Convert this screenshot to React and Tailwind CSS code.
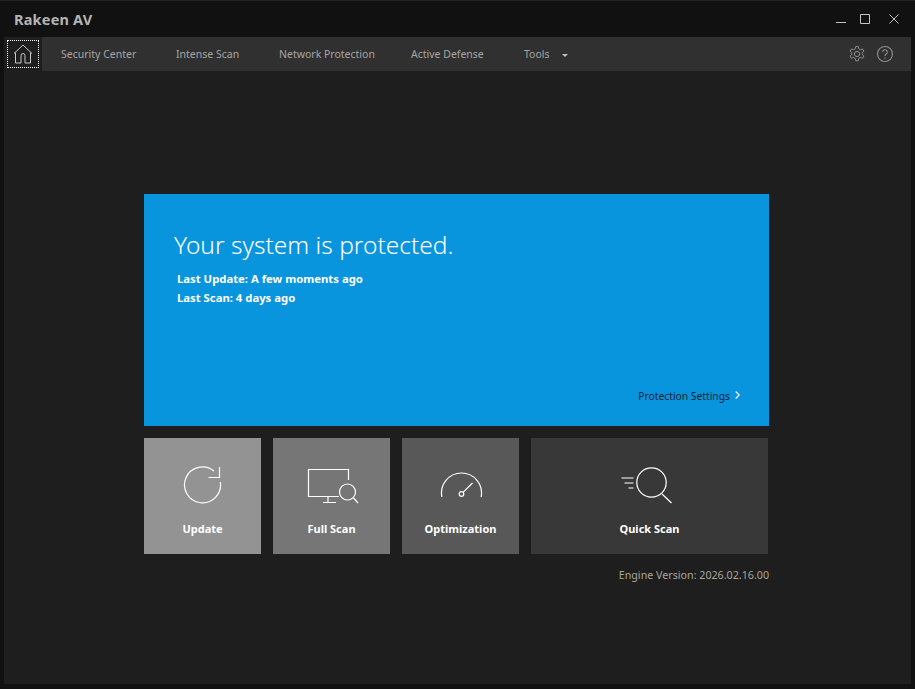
const font = { fontFamily: '"Noto Sans", sans-serif' };

function Home() {
  return (
    <svg width="20" height="20" viewBox="0 0 20 20" fill="none" stroke="#c8c8c8" strokeWidth="1">
      <path d="M1 9.500 10 1l9 8.500M2.500 8.500V19H8v-7.500a2 2 0 0 1 4 0V19h5.500V8.500" />
    </svg>
  );
}

function Gear() {
  return (
    <svg width="18" height="18" viewBox="0 0 24 24" fill="none" stroke="#8f8f8f" strokeWidth="1.300" strokeLinejoin="round">
      <path d="M10.300 2h3.400l.6 3 2.300 1.300 2.900-1 1.700 3-2.300 2v2.400l2.300 2-1.700 3-2.900-1-2.300 1.300-.6 3h-3.400l-.6-3-2.300-1.300-2.900 1-1.700-3 2.300-2v-2.400l-2.300-2 1.700-3 2.900 1L9.700 5z" />
      <circle cx="12" cy="12" r="3.500" />
    </svg>
  );
}

function Help() {
  return (
    <svg width="18" height="18" viewBox="0 0 18 18" fill="none" stroke="#8f8f8f" strokeWidth="1.100">
      <circle cx="9" cy="9" r="7.500" />
      <path d="M6.700 7a2.300 2.300 0 1 1 3.500 2c-.8.500-1.200 1-1.200 2" />
      <path d="M9 12.500v1.200" />
    </svg>
  );
}

function Refresh() {
  return (
    <svg width="40" height="40" viewBox="0 0 40 40" fill="none" stroke="#fff" strokeWidth="1.200">
      <path d="M37.300 17A18 18 0 1 1 31 6" />
      <path d="M25.500 12.500H36.500V2" />
    </svg>
  );
}

function Monitor() {
  return (
    <svg width="54" height="40" viewBox="0 0 54 40" fill="none" stroke="#fff" strokeWidth="1.200">
      <path d="M43.500 15V4.500H3.500V31.500H34" />
      <path d="M23 31.500V37.500M18 37.500H31" />
      <circle cx="42.500" cy="27" r="8" />
      <path d="M48.500 33 53 38" />
    </svg>
  );
}

function Gauge() {
  return (
    <svg width="44" height="40" viewBox="0 0 44 40" fill="none" stroke="#fff" strokeWidth="1.200">
      <path d="M2.900 32A20 20 0 1 1 42.100 32" />
      <circle cx="22.500" cy="29" r="2.300" />
      <path d="M24.300 27.200 33.500 18" />
    </svg>
  );
}

function Quick() {
  return (
    <svg width="60" height="40" viewBox="0 0 60 40" fill="none" stroke="#fff" strokeWidth="1.200">
      <circle cx="31.500" cy="17.500" r="14.700" />
      <path d="M42 29 51.500 38" />
      <path d="M1.500 13H13.500M4.500 18H13.500M8.500 23H13.500" />
    </svg>
  );
}

function Tile({ bg, width, icon, label }) {
  return (
    <button className={`${bg} ${width} h-[116px] flex flex-col items-center`}>
      <span className="h-[79px] pt-[27px] flex items-start justify-center">{icon}</span>
      <span className="text-[11px] leading-[24px] font-bold text-white">{label}</span>
    </button>
  );
}

const navItems = [
  ["Security Center", "w-[115px]"],
  ["Intense Scan", "w-[103px]"],
  ["Network Protection", "w-[132px]"],
  ["Active Defense", "w-[113px]"],
];

export default function App() {
  return (
    <div style={font} className="w-[915px] h-[689px] bg-[#111111] flex flex-col px-[4px] pb-[5px] overflow-hidden border-t border-[#222222]">
      <header className="h-[36px] shrink-0 flex items-center pl-[10px] pr-[12px]">
        <h1 className="pt-[1px] text-[14.500px] font-bold text-[#b4b4b4] tracking-[0.2px]">Rakeen AV</h1>
        <div className="ml-auto flex items-center">
          <svg width="10" height="10" viewBox="0 0 10 10" stroke="#c4c4c4" strokeWidth="1" className="mr-[14px]"><path d="M0 8.500h10" /></svg>
          <svg width="10" height="10" viewBox="0 0 10 10" fill="none" stroke="#c4c4c4" strokeWidth="1" className="mr-[19px]"><path d="M.5.500h9v9H.500z" /></svg>
          <svg width="10" height="10" viewBox="0 0 10 10" stroke="#c4c4c4" strokeWidth="1"><path d="m.5.500 9 9M9.500.500l-9 9" /></svg>
        </div>
      </header>

      <nav className="h-[34px] shrink-0 flex">
        <div className="w-[38px] bg-[#1e1e1e] pl-[3px] pt-[3px]">
          <div className="w-[32px] h-[28px] border border-dotted border-white flex items-center justify-center">
            <Home />
          </div>
        </div>
        <div className="flex-1 bg-[#303030] flex items-center pl-[19px] pr-[17px] text-[10.500px] text-[#a5a5a5]">
          {navItems.map(([label, w]) => (
            <span key={label} className={`${w} pt-[1px]`}>{label}</span>
          ))}
          <span className="pt-[1px]">Tools</span>
          <span className="ml-[12px] mt-[2px] w-0 h-0 border-x-[3.500px] border-x-transparent border-t-[3.500px] border-t-[#c0c0c0]" />
          <div className="ml-auto flex items-center gap-[10px]">
            <Gear />
            <Help />
          </div>
        </div>
      </nav>

      <main className="flex-1 bg-[#1e1e1e] pl-[140px] pt-[123px]">
        <div className="w-[625px]">
          <section className="h-[232px] bg-[#0995de] flex flex-col pl-[30px] pr-[29px]">
            <h2 className="mt-[34px] text-[24.500px] leading-[34px] font-light text-white">Your system is protected.</h2>
            <p className="mt-[7px] ml-[3px] text-[11.300px] leading-[19px] font-bold text-white">Last Update: A few moments ago</p>
            <p className="ml-[3px] text-[11.300px] leading-[19px] font-bold text-white">Last Scan: 4 days ago</p>
            <div className="mt-auto mb-[22px] ml-auto flex items-center gap-[5px] text-[10.300px] leading-[16px] text-[#0b1e33]">
              <span>Protection Settings</span>
              <svg width="5" height="8" viewBox="0 0 5 8" fill="none" stroke="#ffffff" strokeWidth="1.100" className="-mt-[2px]"><path d="m.7.500 3.500 3.500-3.500 3.500" /></svg>
            </div>
          </section>
          <div className="mt-[12px] flex gap-[12px]">
            <Tile bg="bg-[#939393]" width="w-[117px]" icon={<Refresh />} label="Update" />
            <Tile bg="bg-[#767676]" width="w-[117px]" icon={<Monitor />} label="Full Scan" />
            <Tile bg="bg-[#585858]" width="w-[117px]" icon={<Gauge />} label="Optimization" />
            <Tile bg="bg-[#383838]" width="w-[237px]" icon={<Quick />} label="Quick Scan" />
          </div>
          <p className="mt-[13px] text-right text-[10.700px] leading-[16px] text-[#a8a69a]">Engine Version: 2026.02.16.00</p>
        </div>
      </main>
    </div>
  );
}
